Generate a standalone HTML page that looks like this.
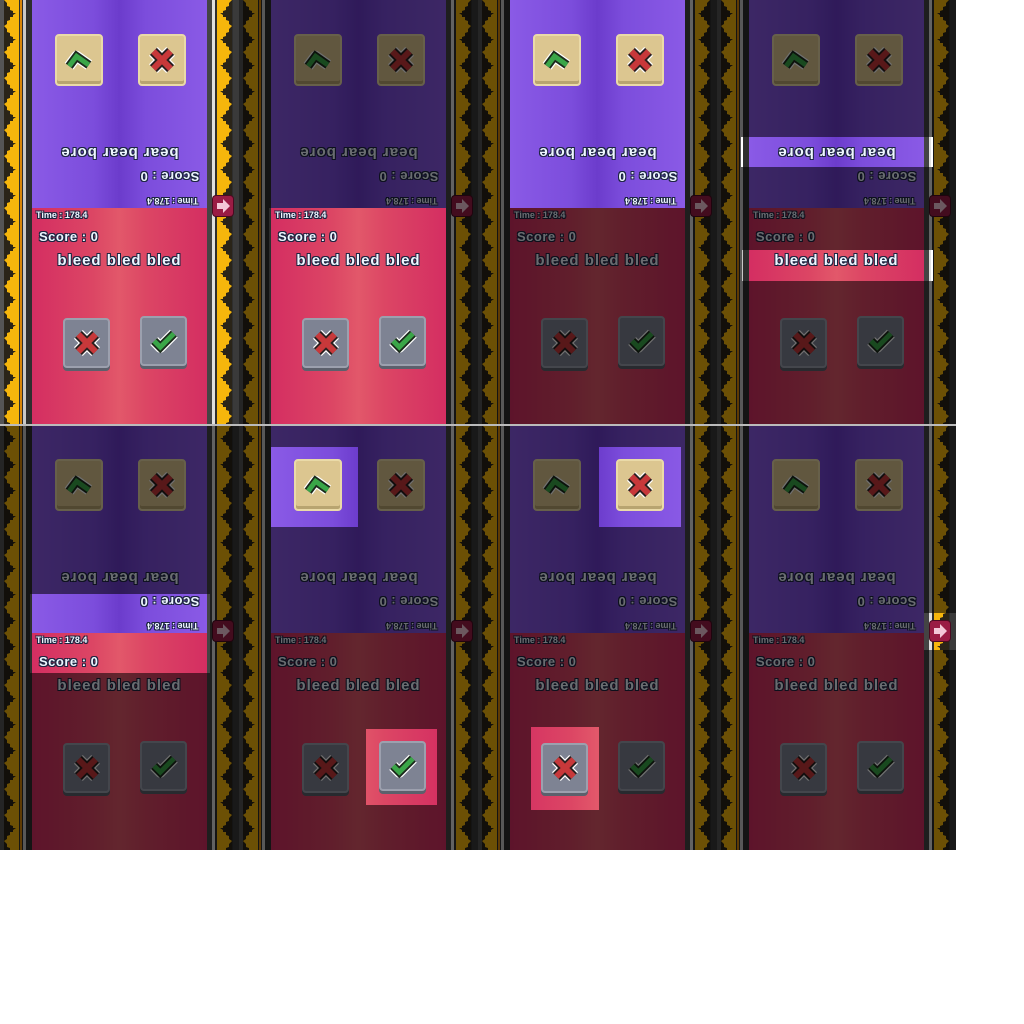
<!DOCTYPE html>
<html><head><meta charset="utf-8">
<style>
html,body{margin:0;padding:0;background:#fff;width:1024px;height:1024px;overflow:hidden}
.p{position:absolute;width:239px;height:425px;overflow:hidden;background:#2e2e2e;font-family:"Liberation Sans",sans-serif;font-weight:bold}
.a{position:absolute}
.pur{left:32px;top:0;width:175px;height:208px;background:linear-gradient(90deg,#8a5ae6 0%,#7c4ddc 35%,#6c3ccc 50%,#7c4ddc 65%,#8a5ae6 100%)}
.red{left:32px;top:208px;width:175px;height:217px;background:linear-gradient(90deg,#d42e62 0%,#dc4664 35%,#e2586a 50%,#dc4664 65%,#d42e62 100%)}
.t{position:absolute;color:#eef6ff;white-space:nowrap;text-shadow:-1px -1px 0 #1c2540,1px -1px 0 #1c2540,-1px 1px 0 #1c2540,1px 1px 0 #1c2540,0 1px 0 #1c2540,1px 0 0 #1c2540}
.rot{transform:rotate(180deg)}
.btn{position:absolute;border-radius:4px}
.tan{background:#dcc690;border:2px solid #eadaa8;box-shadow:0 -3px 0 #b8a470 inset}
.gray{background:#7e8393;border:2px solid #9ca0ae;box-shadow:0 3px 0 #5c606c}
.ov{position:absolute;left:0;top:0;width:239px;height:425px;background:rgba(0,0,0,.56)}
</style></head><body>
<svg width="0" height="0" style="position:absolute">
<defs>
<pattern id="zz" width="15" height="26" patternUnits="userSpaceOnUse">
<rect width="15" height="26" fill="#f6b60c"/>
<polygon points="0,0 3,3 3,6 6,7 6,10 9,11 9,13 12,13 9,15 9,17 6,17 6,20 3,21 3,24 0,26" fill="#2a2418"/>
</pattern>
</defs></svg>
<div id="root"></div>
<script>
var X='<svg width="32" height="32" viewBox="-13 -13 26 26"><path d="M-7-7L7 7M7-7L-7 7" stroke="#fff" stroke-width="10"/><path d="M-7-7L7 7M7-7L-7 7" stroke="#2a2020" stroke-width="8"/><path d="M-7-7L7 7M7-7L-7 7" stroke="#c8383a" stroke-width="5"/></svg>';
var C='<svg width="32" height="32" viewBox="-13 -13 26 26"><path d="M-8 0L-3 5L8-6" fill="none" stroke="#fff" stroke-width="9" stroke-linejoin="round"/><path d="M-8 0L-3 5L8-6" fill="none" stroke="#1c2a1c" stroke-width="7"/><path d="M-8 0L-3 5L8-6" fill="none" stroke="#3aa648" stroke-width="4"/></svg>';
var U='<svg width="32" height="32" viewBox="-13 -13 26 26"><path d="M-8 5L-2-3L8 4" fill="none" stroke="#fff" stroke-width="9" stroke-linejoin="round"/><path d="M-8 5L-2-3L8 4" fill="none" stroke="#1c2a1c" stroke-width="7"/><path d="M-8 5L-2-3L8 4" fill="none" stroke="#3aa648" stroke-width="4"/></svg>';
function panel(){
 var h='';
 h+='<div class="a" style="left:0;top:0;width:4px;height:425px;background:#555"></div>';
 h+='<svg class="a" style="left:4px;top:0" width="15" height="425"><rect width="15" height="425" fill="url(#zz)"/></svg>';
 h+='<div class="a" style="left:20px;top:0;width:2px;height:425px;background:#d8860a"></div>';
 h+='<div class="a" style="left:23px;top:0;width:3px;height:425px;background:#c8c8c8"></div>';
 h+='<div class="a pur"></div><div class="a red"></div>';
 h+='<div class="a" style="left:207px;top:0;width:5px;height:425px;background:#444"></div>';
 h+='<div class="a" style="left:212px;top:0;width:3px;height:425px;background:#e0e0e0"></div>';
 h+='<svg class="a" style="left:217px;top:0;transform:scaleX(-1)" width="15" height="425"><rect width="15" height="425" fill="url(#zz)"/></svg>';
 h+='<div class="a" style="left:233px;top:0;width:6px;height:425px;background:#3a3a3a"></div>';
 h+='<div class="a" style="left:213px;top:196px;width:20px;height:20px;background:#9a1c44;border-radius:3px;box-shadow:0 0 0 1px #4a0a20"><svg width="20" height="20"><path d="M4 7H10V3L17 10L10 17V13H4Z" fill="#f4c8d8"/></svg></div>';
 h+='<div class="btn tan" style="left:55px;top:34px;width:44px;height:48px"><div class="a" style="left:6px;top:8px">'+U+'</div></div>';
 h+='<div class="btn tan" style="left:138px;top:34px;width:44px;height:48px"><div class="a" style="left:6px;top:8px">'+X+'</div></div>';
 h+='<div class="t rot" style="left:32px;width:175px;text-align:center;top:144px;font-size:15px;letter-spacing:1px">bear bear bore</div>';
 h+='<div class="t rot" style="left:140px;top:169px;font-size:13px;letter-spacing:.5px">Score : 0</div>';
 h+='<div class="t rot" style="left:147px;top:196px;font-size:9px">Time : 178.4</div>';
 h+='<div class="t" style="left:36px;top:210px;font-size:9px">Time : 178.4</div>';
 h+='<div class="t" style="left:39px;top:229px;font-size:13px;letter-spacing:.5px">Score : 0</div>';
 h+='<div class="t" style="left:32px;width:175px;text-align:center;top:252px;font-size:15px;letter-spacing:1px">bleed bled bled</div>';
 h+='<div class="btn gray" style="left:63px;top:318px;width:43px;height:46px"><div class="a" style="left:6px;top:7px">'+X+'</div></div>';
 h+='<div class="btn gray" style="left:140px;top:316px;width:43px;height:46px"><div class="a" style="left:6px;top:7px">'+C+'</div></div>';
 return h;
}
function rp(r){return 'M'+r[0]+' '+r[1]+'H'+(r[0]+r[2])+'V'+(r[1]+r[3])+'H'+r[0]+'Z';}
var holes=[null,[[30,208,177,217]],[[32,0,175,208]],[[25,137,190,30],[25,250,190,31]],[[30,169,180,79]],[[32,22,87,80],[127,304,71,76]],[[121,22,82,80],[53,302,68,83]],[[207,188,32,37]]];
var xs=[0,239,478,717],out='';
for(var i=0;i<8;i++){
 var x=xs[i%4],y=i<4?0:425;
 out+='<div class="p" style="left:'+x+'px;top:'+y+'px">'+panel();
 if(holes[i]){
  var d='M0 0H239V425H0Z';holes[i].forEach(function(r){d+=rp(r);});
  out+='<div class="ov" style="clip-path:path(evenodd,\''+d+'\')"></div>';
  if(i==3){out+='<div class="a" style="left:24px;top:137px;width:2px;height:30px;background:#fff"></div><div class="a" style="left:214px;top:137px;width:2px;height:30px;background:#fff"></div><div class="a" style="left:214px;top:250px;width:2px;height:31px;background:#fff"></div>';}
 }
 out+='</div>';
}
out+='<div class="a" style="left:0;top:424px;width:956px;height:2px;background:#bbb"></div>';
document.getElementById('root').innerHTML=out;
</script>
</body></html>
